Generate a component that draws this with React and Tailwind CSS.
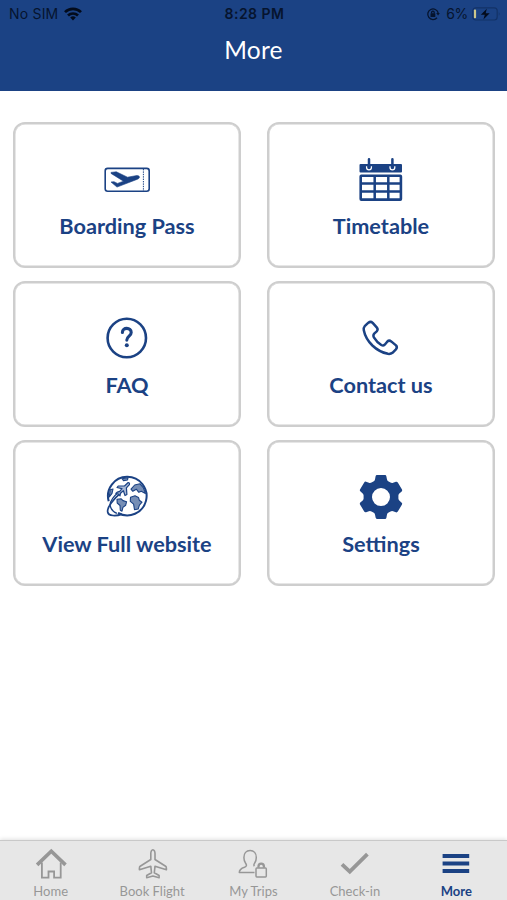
import React from 'react';

const BoardingPassIcon = () => (
  <svg viewBox="0 0 48 48" className="h-12 w-12" fill="none" stroke="currentColor">
    <rect x="2.2" y="12.4" width="44" height="22.8" rx="2.5" strokeWidth="1.6" />
    <path d="M40.4 13v22" strokeWidth="1" strokeDasharray="1.4 1" />
    <path
      d="M8 16.4 13.3 15.8 24.5 21.2 34 19.5Q36.7 19.6 36.5 21.3 36.4 22.4 34.5 23.2L14 31.1 8 26 11 25.7 14.5 27.4 20.5 25.2 8 17.4Z"
      fill="currentColor"
      strokeWidth="0.6"
      strokeLinejoin="round"
    />
  </svg>
);

const TimetableIcon = () => (
  <svg viewBox="0 -0.7 48 48" className="h-12 w-12" fill="none" stroke="currentColor">
    <rect x="2.5" y="7.3" width="42.5" height="8.6" rx="1" fill="currentColor" stroke="none" />
    <path d="M9.6 9.5v1.3a2.4 2.4 0 0 0 4.8 0V9.5M33 9.5v1.3a2.4 2.4 0 0 0 4.8 0V9.5" stroke="white" strokeWidth="1.3" />
    <path d="M12 2.5v8M35.4 2.5v8" strokeWidth="2.5" strokeLinecap="round" />
    <rect x="3.7" y="19.1" width="40.2" height="23.8" rx="0.6" strokeWidth="2.6" />
    <path d="M17.7 19v24M31.3 19v24M4 26.8h40M4 34.8h40" strokeWidth="2.5" />
  </svg>
);

const FaqIcon = () => (
  <svg viewBox="0 0 48 48" className="h-12 w-12" fill="none" stroke="currentColor">
    <circle cx="23.8" cy="23" r="19.2" strokeWidth="2.6" />
    <path d="M19.4 17.4c0-2.6 2-4 4.4-4s4.4 1.6 4.4 4.1c0 3.6-4.4 3.8-4.4 7.6" strokeWidth="3.1" strokeLinecap="round" />
    <circle cx="23.8" cy="30.3" r="2" fill="currentColor" stroke="none" />
  </svg>
);

const PhoneIcon = () => (
  <svg viewBox="0.3 0 48 48" className="h-12 w-12" fill="none" stroke="currentColor" strokeWidth="2.5" strokeLinejoin="round">
    <path d="M8 11.2 11.7 7.7Q13.9 6 16 7.9L20.2 12.6Q21.7 14.6 20 16.4L17.5 18.6Q16.1 20.2 17.2 22.3 20 27 24.6 30 26.6 31.1 28 29.7L30.5 26.7Q32.4 24.8 34.5 26.4L39.3 30.4Q41 32.3 39.2 34.3L35.8 37.8Q34 39.2 31.2 38.8 22.5 37 15.7 30.5 8.7 23.5 7.1 15.2 6.6 12.8 8 11.2Z" />
  </svg>
);

const GlobeIcon = () => (
  <svg viewBox="0 0 48 48" className="h-12 w-12" fill="none" stroke="currentColor" strokeLinejoin="round">
    <path d="M5.7 27.3A19.3 19.3 0 1 1 15 39" strokeWidth="2" />
    <path d="M17.8 18.8C10.5 24.8 3.8 33.5 4.7 38c.7 4.4 8.6 4.3 14.2 2.1" strokeWidth="1.7" />
    <path d="M16.5 17.2C10 22.8 6.4 28.7 7.3 32.2c.7 2.8 3.5 5.9 6.6 7.2" strokeWidth="1.3" />
    {/* continents */}
    <g fill="currentColor" fillOpacity="0.6" strokeWidth="1.1">
      <path d="M14 25.2 18.2 24.8 20 26.6 23.6 27.7 22.7 31.2 19.9 33.4 19 37.2 17.3 36.2 17 31.5 14.2 29Z" />
      <path d="M27.5 23.3 32 21.8 35.5 23.5 36.3 26.2 39 28.2 36.4 31.2 35.2 35 31.5 35.7 30.6 30.2 27.3 27.4Z" />
      <path d="M28 15.2 31.7 11 37 9.8 40.5 14 42.4 19.4 38.3 17.2 35.8 18.3 33.3 15.2 29.8 17.3Z" />
      <path d="M7.2 15.8 10 15 9 19.4 6.3 23Z" />
      <path d="M19 4.7 25 3.8 24.5 6 20.5 6.6Z" />
    </g>
    <path
      d="M24.9 8.7Q27 8.4 26.4 10.6L23.4 13.9 23.9 20.5 22 21.5 20.4 16.7 17.4 19.2 17 21.8 15.5 20.2 12.8 19.5 14.2 18.2 16.5 17.7 19 14.7 14 13.5 15.2 12 21.5 12Z"
      fill="#a9b9d6"
      strokeWidth="1.2"
    />
  </svg>
);

const SettingsIcon = () => (
  <svg viewBox="0 0 48 48" className="h-12 w-12" fill="currentColor">
    <path
      fillRule="evenodd"
      d="M20 1.1h8q1.2 0 1.4 1.3l.6 3.2q.3 1.4 1.6 2l1.9 1q1.3.8 2.6.2l2.8-1q1.2-.4 1.9.7l4.2 7.1q.5 1-.3 1.8l-2.4 2.1q-.9.8-.9 2v3.1q0 1.2.9 2l2.4 2.1q.8.8.3 1.8l-4.2 7.1q-.7 1.1-1.9.7l-2.8-1q-1.3-.5-2.6.2l-1.9 1.1q-1.3.6-1.6 2l-.6 3.1Q29.2 45 28 45h-8q-1.2 0-1.4-1.4L18 40.5q-.3-1.4-1.6-2l-1.9-1.1q-1.3-.7-2.6-.2l-2.8 1q-1.2.4-1.9-.7L3 30.4q-.5-1 .3-1.8l2.4-2.1q.9-.8.9-2v-3.1q0-1.2-.9-2l-2.4-2.1q-.8-.8-.3-1.8l4.2-7.1q.7-1.1 1.9-.7l2.8 1q1.3.6 2.6-.2l1.9-1q1.3-.6 1.6-2l.6-3.2Q18.8 1.1 20 1.1ZM24 14.1a9 9 0 1 0 0 18 9 9 0 0 0 0-18Z"
    />
  </svg>
);

const HomeIcon = () => (
  <svg viewBox="0 0 32 32" className="h-8 w-8" fill="none" stroke="currentColor">
    <path d="M6.9 14.5v15.2h6.6v-6.2h5.6v6.2h6.6V14.5" strokeWidth="1.8" />
    <path d="M2.1 16.9 16.3 3.2 30.5 16.9" strokeWidth="3.6" />
  </svg>
);

const FlightIcon = () => (
  <svg viewBox="-0.7 0 32 32" className="h-8 w-8" fill="none" stroke="currentColor" strokeWidth="1.6" strokeLinejoin="round">
    <path d="M16.2 1.8c-1.2 0-2.1 1.7-2.1 3.8v5.9L3.5 18.2q-.8.6-.8 2v1.6l11.4-3.6.7 6.6-4.8 2.7v2.2l6.2-1.6 6.2 1.6v-2.2l-4.8-2.7.7-6.6 11.4 3.6v-1.6q0-1.4-.8-2L18.3 11.5V5.6c0-2.1-.9-3.8-2.1-3.8Z" />
  </svg>
);

const TripsIcon = () => (
  <svg viewBox="0 0 32 32" className="h-8 w-8" fill="none" stroke="currentColor" strokeWidth="1.5" strokeLinejoin="round">
    <path d="M17.5 24.6H2.3c0-3.4 2.2-4.3 5.2-5.3 2.2-.8 2.5-2.2 1.1-4.1-1.3-1.8-1.7-3.8-1.7-5.8 0-4 2.4-7 6.2-7s6.2 3 6.2 7c0 2-.4 4-1.7 5.8-.8 1.2-.9 2.2-.3 3" />
    <rect x="19" y="20.1" width="10.3" height="8.8" rx="0.8" />
    <path d="M21.5 19.7v-1.4a2.7 2.7 0 0 1 5.4 0v1.4" strokeWidth="2.3" />
  </svg>
);

const CheckIcon = () => (
  <svg viewBox="0 0 32 32" className="h-8 w-8" fill="none" stroke="currentColor" strokeWidth="3.8">
    <path d="M3 16.3 10.8 23.7 28.4 6.2" />
  </svg>
);

const MenuIcon = () => (
  <svg viewBox="0 0 32 32" className="h-8 w-8" fill="currentColor">
    <path d="M2.6 6h26.6v4H2.6zM2.6 13.5h26.6v4H2.6zM2.6 21h26.6v4H2.6z" />
  </svg>
);

const menuItems = [
  { label: 'Boarding Pass', icon: BoardingPassIcon },
  { label: 'Timetable', icon: TimetableIcon },
  { label: 'FAQ', icon: FaqIcon },
  { label: 'Contact us', icon: PhoneIcon },
  { label: 'View Full website', icon: GlobeIcon },
  { label: 'Settings', icon: SettingsIcon },
];

const tabs = [
  { label: 'Home', icon: HomeIcon },
  { label: 'Book Flight', icon: FlightIcon },
  { label: 'My Trips', icon: TripsIcon },
  { label: 'Check-in', icon: CheckIcon },
  { label: 'More', icon: MenuIcon, active: true },
];

function StatusBar() {
  return (
    <div className="grid h-7 grid-cols-3 items-center pl-[9px] pr-[6px] font-['Inter',sans-serif] text-[14px] leading-none text-[#06142e]">
      <div className="flex items-center gap-[6px]">
        <span className="tracking-[0.2px]">No SIM</span>
        <svg viewBox="0 0 18 14" className="h-[14px] w-[18px]" fill="none" stroke="#030b1b" strokeWidth="2.7">
          <path d="M1 5.1a11.4 11.4 0 0 1 16 0M4 8.5a7.2 7.2 0 0 1 10 0" />
          <path d="m9 13.5-2.8-3a4 4 0 0 1 5.6 0Z" fill="#030b1b" stroke="none" />
        </svg>
      </div>
      <span className="-ml-px text-center font-semibold tracking-[0.5px]">8:28 PM</span>
      <div className="flex items-center justify-end">
        <svg viewBox="0 0 14 14" className="mr-[6px] h-[14px] w-[14px]" fill="none" stroke="currentColor" strokeWidth="1.3">
          <path d="M11 10.8A5.3 5.3 0 1 1 12.2 6" />
          <path d="m10.2 6.1 3.6-.2-1.7 2.7Z" fill="currentColor" stroke="none" />
          <path d="M5.6 6.5V5.4a1.3 1.3 0 0 1 2.6 0v1.1" />
          <rect x="4.5" y="6.3" width="4.8" height="3.6" rx="0.5" fill="currentColor" stroke="none" />
        </svg>
        <span className="tracking-[-0.3px]">6%</span>
        <svg viewBox="0 0 29 14" className="ml-1 h-[14px] w-[29px]">
          <rect x="0.8" y="0.8" width="24.4" height="12.2" rx="3" fill="none" stroke="#133267" strokeWidth="1.2" />
          <rect x="1.9" y="2.6" width="2.2" height="8.6" rx="0.8" fill="#cdc78c" />
          <path d="m14.8 1.7-6 6h4l-1.4 4.8 6.3-6.2h-4Z" fill="#030b1b" />
          <path d="M26.8 4.8q1.6 2 0 4Z" fill="#133267" />
        </svg>
      </div>
    </div>
  );
}

function App() {
  return (
    <div className="flex h-[900px] w-full flex-col bg-white font-['Lato',sans-serif]">
      <header className="h-[91px] bg-[#1b4284]">
        <StatusBar />
        <h1 className="mt-[4px] text-center text-[24.5px] leading-9 tracking-[0.2px] text-white">More</h1>
      </header>

      <main className="grid flex-1 grid-cols-2 content-start gap-x-[26px] gap-y-[13px] pt-[31px] pr-[12px] pl-[13px] text-[#1b4284]">
        {menuItems.map(({ label, icon: Icon }) => (
          <div
            key={label}
            className="flex h-[146px] flex-col items-center rounded-[12px] border-2 border-[#cecece] pt-8 shadow-[inset_0_0_0_0.5px_#cecece]"
          >
            <Icon />
            <span className="mt-[7px] text-[21.7px] leading-[30px] font-bold">{label}</span>
          </div>
        ))}
      </main>

      <nav className="grid h-[60px] grid-cols-5 border-t border-[#c9c9c9] bg-[#e7e7e7] pt-[7px] shadow-[0_-1px_4px_rgba(0,0,0,0.12)]">
        {tabs.map(({ label, icon: Icon, active }) => (
          <div
            key={label}
            className={`flex flex-col items-center ${active ? 'font-bold text-[#1b4284]' : 'text-[#979797]'}`}
          >
            <Icon />
            <span className="mt-[3px] text-[13px] leading-4">{label}</span>
          </div>
        ))}
      </nav>
    </div>
  );
}

export default App;
